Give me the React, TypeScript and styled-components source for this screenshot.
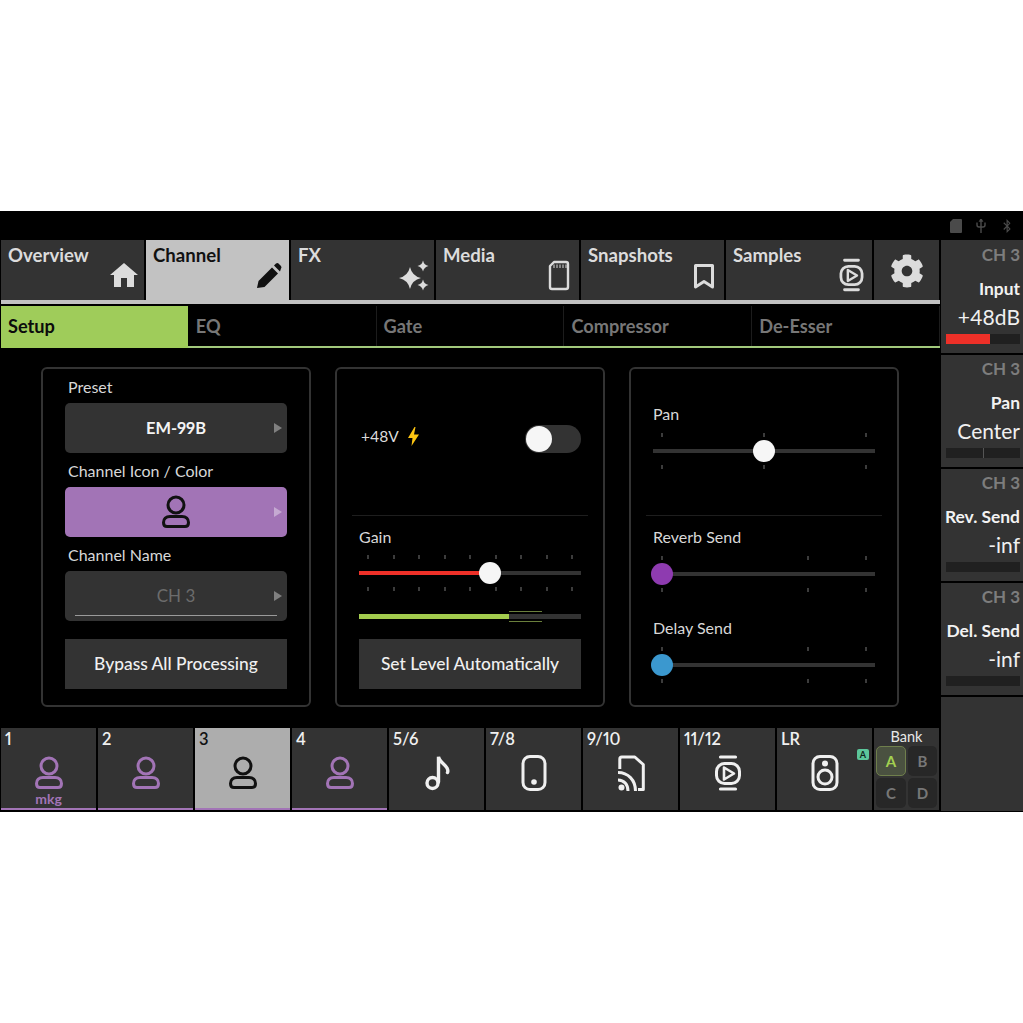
import React from "react";
import styled, { createGlobalStyle } from "styled-components";
import { FaCog, FaBluetoothB } from "react-icons/fa";

const GlobalStyle = createGlobalStyle`
  html, body { margin: 0; padding: 0; background: #fff; }
  * { box-sizing: border-box; }
  body { font-family: "Lato", "Liberation Sans", sans-serif; font-feature-settings: "pnum"; }
`;

const PURPLE = "#a274b6";
const DARK = "#333333";

const Page = styled.div`
  height: 1023px;
  padding-top: 211px;
  overflow: hidden;
`;

const Screen = styled.div`
  width: 1023px;
  height: 601px;
  background: #000;
  display: flex;
  flex-direction: column;
`;

const StatusBar = styled.div`
  height: 29px;
  flex: none;
  display: flex;
  justify-content: flex-end;
  align-items: center;
  padding: 0 9px 0 0;
  color: #4a4a4a;
  svg + svg { margin-left: 14px; }
`;

const Body = styled.div`
  flex: 1;
  display: flex;
`;

const Main = styled.div`
  width: 940px;
  flex: none;
  padding-left: 1px;
  display: flex;
  flex-direction: column;
`;

const TabBar = styled.div`
  height: 64px;
  display: flex;
  gap: 2px;
  border-bottom: 4px solid #c2c2c2;
`;

const Tab = styled.div<{ $active?: boolean; $w: number }>`
  width: ${(p) => p.$w}px;
  height: ${(p) => (p.$active ? 64 : 60)}px;
  background: ${(p) => (p.$active ? "#c2c2c2" : DARK)};
  color: ${(p) => (p.$active ? "#111" : "#dcdcdc")};
  padding: 4px 4px ${(p) => (p.$active ? 10 : 6)}px 7px;
  display: flex;
  flex-direction: column;
`;

const TabLabel = styled.div`
  font-size: 18.6px;
  line-height: 22px;
  font-weight: 700;
  height: 14px;
`;

const TabIcon = styled.svg`
  width: 36px;
  height: 36px;
  margin-top: auto;
  margin-left: auto;
  flex: none;
`;

const GearTab = styled.div`
  width: 65px;
  height: 60px;
  padding-top: 2px;
  background: ${DARK};
  color: #dcdcdc;
  display: flex;
  align-items: center;
  justify-content: center;
  font-size: 34px;
`;

const SubTabs = styled.div`
  height: 42px;
  margin-top: 2px;
  display: grid;
  grid-template-columns: repeat(5, 1fr);
  border-bottom: 2px solid #a2c97c;
  width: 939px;
`;

const SubTab = styled.div<{ $active?: boolean }>`
  height: ${(p) => (p.$active ? 42 : 40)}px;
  background: ${(p) => (p.$active ? "#9fcc5a" : "transparent")};
  background-clip: padding-box;
  color: ${(p) => (p.$active ? "#0c0c0c" : "#777")};
  border-right: 1px solid ${(p) => (p.$active ? "transparent" : "#1c1c1c")};
  font-size: 18.2px;
  font-weight: 700;
  line-height: 40px;
  padding-left: 7px;
`;

const Panels = styled.div`
  margin-top: 19px;
  padding-left: 40px;
  display: flex;
  gap: 24px;
`;

const Panel = styled.div`
  width: 270px;
  height: 340px;
  border: 2px solid #333;
  border-radius: 6px;
  padding: 0 15px;
  display: flex;
  flex-direction: column;
`;

const Section = styled.div<{ $top?: boolean; $pad?: number }>`
  padding: ${(p) => p.$pad ?? 0}px 7px 0;
  ${(p) => (p.$top ? "height: 147px; border-bottom: 1px solid #1e1e1e;" : "")}
`;

const FieldLabel = styled.div`
  color: #d8d8d8;
  font-size: 16px;
  line-height: 20px;
  padding-left: 3px;
  margin: 8px 0 6px;
`;

const Selector = styled.div<{ $bg?: string }>`
  position: relative;
  height: 50px;
  border-radius: 5px;
  background: ${(p) => p.$bg ?? DARK};
  display: flex;
  align-items: center;
  justify-content: center;
  color: #f4f4f4;
  font-size: 16.4px;
  font-weight: 700;
`;

const SelectorText = styled.span<{ $muted?: boolean }>`
  padding-bottom: 2px;
  ${(p) => (p.$muted ? "color: #6c6c6c; font-weight: 400; font-size: 17px;" : "")}
`;

const Caret = styled.span`
  position: absolute;
  right: 5px;
  top: 20px;
  width: 0;
  height: 0;
  border-left: 8px solid rgba(255, 255, 255, 0.38);
  border-top: 5px solid transparent;
  border-bottom: 5px solid transparent;
`;

const Underline = styled.span`
  position: absolute;
  left: 10px;
  right: 10px;
  bottom: 5px;
  height: 1px;
  background: #9a9a9a;
`;

const ActionButton = styled.div<{ $top?: number }>`
  height: 50px;
  margin-top: ${(p) => p.$top ?? 18}px;
  padding-bottom: 2px;
  background: ${DARK};
  color: #f0f0f0;
  font-size: 17.4px;
  font-weight: 500;
  display: flex;
  align-items: center;
  justify-content: center;
`;

const PhantomRow = styled.div`
  height: 28px;
  display: flex;
  align-items: center;
  justify-content: space-between;
`;

const PhantomLabel = styled.div`
  display: flex;
  align-items: center;
  gap: 9px;
  padding-left: 2px;
  margin-top: -6px;
  color: #dcdcdc;
  font-size: 15.5px;
`;

const Switch = styled.div`
  width: 56px;
  height: 28px;
  border-radius: 14px;
  background: ${DARK};
  padding: 1px;
`;

const SwitchKnob = styled.div`
  width: 26px;
  height: 26px;
  border-radius: 50%;
  background: #f6f6f6;
`;

const SliderLabel = styled.div<{ $top?: number; $gap?: number }>`
  color: #d8d8d8;
  font-size: 16px;
  line-height: 20px;
  margin-top: ${(p) => p.$top ?? 0}px;
  margin-bottom: ${(p) => p.$gap ?? 8}px;
`;

const SliderBox = styled.div`
  position: relative;
  height: 36px;
`;

const Track = styled.div`
  position: absolute;
  left: 0;
  right: 0;
  top: 16px;
  height: 4px;
  background: ${DARK};
`;

const TrackFill = styled.div<{ $color: string }>`
  height: 100%;
  background: ${(p) => p.$color};
`;

const Tick = styled.span<{ $bottom?: boolean }>`
  position: absolute;
  width: 2px;
  height: 4px;
  background: #3c3c3c;
  ${(p) => (p.$bottom ? "bottom: 0;" : "top: 0;")}
`;

const Thumb = styled.div<{ $color: string }>`
  position: absolute;
  top: 7px;
  width: 22px;
  height: 22px;
  margin-left: -11px;
  border-radius: 50%;
  background: ${(p) => p.$color};
`;

const Meter = styled.div`
  position: relative;
  height: 5px;
  margin-top: 23px;
  background: ${DARK};
`;

const MeterGhost = styled.div`
  position: absolute;
  left: 67.6%;
  width: 14.9%;
  top: -3px;
  bottom: -3px;
  border-top: 1px solid #6a7f3c;
  border-bottom: 1px solid #6a7f3c;
`;

const Strip = styled.div`
  margin-top: 21px;
  height: 82px;
  display: flex;
  gap: 2px;
`;

const Cell = styled.div<{ $active?: boolean; $bar?: boolean }>`
  width: 95px;
  height: 82px;
  padding-top: 1px;
  background: ${(p) => (p.$active ? "#adadad" : DARK)};
  color: ${(p) => (p.$active ? "#111" : "#f0f0f0")};
  border-bottom: 2px solid ${(p) => (p.$bar ? PURPLE : "transparent")};
  display: flex;
  flex-direction: column;
  align-items: center;
  position: relative;
`;

const CellNumber = styled.div`
  align-self: flex-start;
  padding-left: 4px;
  font-size: 16.5px;
  font-weight: 600;
  line-height: 20px;
`;

const CellIcon = styled.svg<{ $color?: string }>`
  width: 36px;
  height: 36px;
  margin-top: 6px;
  flex: none;
  color: ${(p) => p.$color ?? "inherit"};
`;

const CellName = styled.div`
  color: ${PURPLE};
  font-size: 14px;
  font-weight: 700;
  line-height: 16px;
`;

const Badge = styled.span`
  position: absolute;
  right: 3px;
  top: 21px;
  width: 12px;
  height: 11px;
  border-radius: 2px;
  background: #5cc69b;
  color: #10251c;
  font-size: 9px;
  font-weight: 700;
  line-height: 11px;
  text-align: center;
`;

const Bank = styled.div`
  width: 65px;
  height: 82px;
  background: ${DARK};
  padding: 0 2px;
`;

const BankTitle = styled.div`
  color: #e8e8e8;
  font-size: 14.5px;
  line-height: 18px;
  text-align: center;
`;

const BankGrid = styled.div`
  display: grid;
  grid-template-columns: 30px 29px;
  grid-auto-rows: 30px;
  gap: 2px;
`;

const BankButton = styled.div<{ $active?: boolean }>`
  border-radius: 5px;
  background: ${(p) => (p.$active ? "#4a5140" : "#272727")};
  border: 1px solid ${(p) => (p.$active ? "#6f7f4c" : "transparent")};
  color: ${(p) => (p.$active ? "#a3d050" : "#777")};
  font-size: 15px;
  font-weight: 700;
  display: flex;
  align-items: center;
  justify-content: center;
`;

const Side = styled.div`
  width: 83px;
  flex: none;
  padding-left: 1px;
  display: flex;
  flex-direction: column;
  gap: 2px;
`;

const SideItem = styled.div`
  height: 112px;
  background: ${DARK};
  padding: 4px 3px 0 2px;
  text-align: right;
  &:first-child { height: 113px; padding-top: 5px; }
  &:last-child { height: 114px; }
`;

const SideChannel = styled.div`
  color: #7d7d7d;
  font-size: 17px;
  font-weight: 700;
  line-height: 20px;
`;

const SideName = styled.div`
  color: #f2f2f2;
  font-size: 17.4px;
  font-weight: 700;
  line-height: 20px;
  margin-top: 14px;
  white-space: nowrap;
`;

const SideValue = styled.div`
  color: #f0f0f0;
  font-size: 21px;
  line-height: 28px;
  margin-top: 4px;
`;

const SideMeter = styled.div<{ $split?: boolean }>`
  position: relative;
  height: 10px;
  margin: 3px 0 0 3px;
  background: #202020;
  ${(p) => (p.$split ? "&::after { content: ''; position: absolute; left: 50%; top: 0; bottom: 0; width: 1px; background: #555; }" : "")}
`;

const SideMeterFill = styled.div`
  height: 100%;
  background: #ee3028;
`;

const PersonPaths = () => (
  <g fill="none" stroke="currentColor" strokeWidth="3">
    <circle cx="18" cy="11" r="8" />
    <path d="M12 22.5 H24 C28 22.5 30.5 25 30.5 28.5 C30.5 31 29 32.5 27 32.5 H9 C7 32.5 5.5 31 5.5 28.5 C5.5 25 8 22.5 12 22.5 Z" />
  </g>
);

const SamplePaths = () => (
  <g fill="none" stroke="currentColor" strokeWidth="3" strokeLinecap="round">
    <path d="M10.5 2 H25.5 M10.5 34 H25.5" strokeWidth="3.2" />
    <rect x="6.5" y="8.5" width="23" height="20" rx="8" />
    <path d="M14 12.5 L24 18.5 L14 24.5 Z" strokeWidth="2.6" strokeLinejoin="round" />
  </g>
);

function Slider({ value, color, ticks, fill }: { value: number; color: string; ticks: number[]; fill?: string }) {
  return (
    <SliderBox>
      {ticks.map((t) => (
        <Tick key={`a${t}`} style={{ left: `${t}%` }} />
      ))}
      {ticks.map((t) => (
        <Tick key={`b${t}`} $bottom style={{ left: `${t}%` }} />
      ))}
      <Track>{fill && <TrackFill $color={fill} style={{ width: `${value}%` }} />}</Track>
      <Thumb $color={color} style={{ left: `${value}%` }} />
    </SliderBox>
  );
}

const gainTicks = Array.from({ length: 9 }, (_, i) => 3.6 + i * 11.5);
const panTicks = [3.7, 49.7, 95.7];
const sendTicks = [3.7, 69.4, 95.7];

function Channels() {
  const persons = [
    { n: "1", name: "mkg" },
    { n: "2" },
    { n: "3", active: true },
    { n: "4" },
  ];
  return (
    <>
      {persons.map((c) => (
        <Cell key={c.n} $active={c.active} $bar>
          <CellNumber>{c.n}</CellNumber>
          <CellIcon viewBox="0 0 36 36" $color={c.active ? "#111" : PURPLE}>
            <PersonPaths />
          </CellIcon>
          {c.name && <CellName>{c.name}</CellName>}
        </Cell>
      ))}
      <Cell>
        <CellNumber>5/6</CellNumber>
        <CellIcon viewBox="0 0 36 36">
          <g fill="none" stroke="currentColor" strokeWidth="3.4" strokeLinecap="round">
            <circle cx="13.5" cy="28" r="5.5" />
            <path d="M19.5 27 V1.8 C20.5 7 26 9 28 13 C29 15 29 16.5 28.5 17.5" />
          </g>
        </CellIcon>
      </Cell>
      <Cell>
        <CellNumber>7/8</CellNumber>
        <CellIcon viewBox="0 0 36 36">
          <rect x="7" y="1.5" width="22" height="33" rx="7" fill="none" stroke="currentColor" strokeWidth="3" />
          <circle cx="18" cy="27" r="2.8" fill="currentColor" />
        </CellIcon>
      </Cell>
      <Cell>
        <CellNumber>9/10</CellNumber>
        <CellIcon viewBox="0 0 36 36">
          <g fill="none" stroke="currentColor" strokeWidth="3">
            <path d="M6.8 14 V4 Q6.8 2 8.8 2 H21.8 L30.3 9.5 V34.5 H25" strokeLinejoin="round" />
            <path d="M5 17.5 C15 17.5 22.5 25 22.5 36" />
            <path d="M5 25 C11 25 15 29.5 15 36" />
          </g>
          <circle cx="8.5" cy="32.5" r="3" fill="currentColor" />
        </CellIcon>
      </Cell>
      <Cell>
        <CellNumber>11/12</CellNumber>
        <CellIcon viewBox="0 0 36 36">
          <SamplePaths />
        </CellIcon>
      </Cell>
      <Cell>
        <CellNumber>LR</CellNumber>
        <CellIcon viewBox="0 0 36 36">
          <g fill="none" stroke="currentColor" strokeWidth="3">
            <rect x="6" y="1.5" width="24" height="33" rx="7" />
            <circle cx="18" cy="22" r="7" />
          </g>
          <circle cx="18" cy="8.5" r="3" fill="currentColor" />
        </CellIcon>
        <Badge>A</Badge>
      </Cell>
    </>
  );
}

export default function App() {
  return (
    <Page>
      <GlobalStyle />
      <Screen>
        <StatusBar>
          <svg width="12" height="14" viewBox="0 0 12 14">
            <path d="M3 0 H11 Q12 0 12 1 V13 Q12 14 11 14 H1 Q0 14 0 13 V3 Z" fill="currentColor" />
          </svg>
          <svg width="10" height="14" viewBox="0 0 10 14" fill="none" stroke="currentColor" strokeWidth="1.4">
            <path d="M5 0.5 V14 M1 3.5 V6 Q1 8 3 8 H7 Q9 8 9 6 V3.5" />
            <path d="M3.8 2 L5 0 L6.2 2 Z" fill="currentColor" />
          </svg>
          <FaBluetoothB size={14} />
        </StatusBar>
        <Body>
          <Main>
            <TabBar>
              <Tab $w={143}>
                <TabLabel>Overview</TabLabel>
                <TabIcon viewBox="0 0 36 36">
                  <path d="M20 5 L34 17 H30 V29 H23 V20 H17 V29 H10 V17 H6 Z" fill="currentColor" />
                </TabIcon>
              </Tab>
              <Tab $w={143} $active>
                <TabLabel>Channel</TabLabel>
                <TabIcon viewBox="0 0 36 36">
                  <path d="M8 30 L9.5 23 L23 9.5 L29 15.5 L15.5 29 Z" fill="currentColor" />
                  <path d="M25 7.5 L27 5.5 Q28.5 4.5 29.5 5.5 L32 8 Q33 9.5 32 10.5 L31 13.5 Z" fill="currentColor" />
                </TabIcon>
              </Tab>
              <Tab $w={143}>
                <TabLabel>FX</TabLabel>
                <TabIcon viewBox="0 0 36 36">
                  <path d="M16 9 Q18 18 27 20 Q18 22 16 31 Q14 22 5 20 Q14 18 16 9 Z" fill="currentColor" />
                  <path d="M29 2.5 Q30 7 34.5 8 Q30 9 29 13.5 Q28 9 23.5 8 Q28 7 29 2.5 Z" fill="currentColor" />
                  <path d="M29 21.5 Q30 26 34.5 27 Q30 28 29 32.5 Q28 28 23.5 27 Q28 26 29 21.5 Z" fill="currentColor" />
                </TabIcon>
              </Tab>
              <Tab $w={143}>
                <TabLabel>Media</TabLabel>
                <TabIcon viewBox="0 0 36 36">
                  <path d="M15 4 H27 Q29 4 29 6 V29 Q29 31 27 31 H13 Q11 31 11 29 V8 Z" fill="none" stroke="currentColor" strokeWidth="2.4" strokeLinejoin="round" />
                  <path d="M15 6.5 V10 M18 6.5 V10 M21 6.5 V10 M24 6.5 V10 M27 6.5 V10" stroke="currentColor" strokeWidth="1" />
                </TabIcon>
              </Tab>
              <Tab $w={143}>
                <TabLabel>Snapshots</TabLabel>
                <TabIcon viewBox="0 0 36 36">
                  <path d="M11.5 7.5 H28.5 V29 L20 23.5 L11.5 29 Z" fill="none" stroke="currentColor" strokeWidth="3" strokeLinejoin="round" />
                </TabIcon>
              </Tab>
              <Tab $w={146}>
                <TabLabel>Samples</TabLabel>
                <TabIcon viewBox="0 0 36 36">
                  <g transform="translate(19.5 17) scale(.92) translate(-18 -18)">
                    <SamplePaths />
                  </g>
                </TabIcon>
              </Tab>
              <GearTab>
                <FaCog />
              </GearTab>
            </TabBar>
            <SubTabs>
              <SubTab $active>Setup</SubTab>
              <SubTab>EQ</SubTab>
              <SubTab>Gate</SubTab>
              <SubTab>Compressor</SubTab>
              <SubTab>De-Esser</SubTab>
            </SubTabs>
            <Panels>
              <Panel>
                <Section>
                  <FieldLabel>Preset</FieldLabel>
                  <Selector>
                    <SelectorText>EM-99B</SelectorText>
                    <Caret />
                  </Selector>
                  <FieldLabel>Channel Icon / Color</FieldLabel>
                  <Selector $bg={PURPLE}>
                    <svg width="36" height="36" viewBox="0 0 36 36" color="#111">
                      <PersonPaths />
                    </svg>
                    <Caret />
                  </Selector>
                  <FieldLabel>Channel Name</FieldLabel>
                  <Selector>
                    <SelectorText $muted>CH 3</SelectorText>
                    <Underline />
                    <Caret />
                  </Selector>
                  <ActionButton>Bypass All Processing</ActionButton>
                </Section>
              </Panel>
              <Panel>
                <Section $top $pad={56}>
                  <PhantomRow>
                    <PhantomLabel>
                      +48V
                      <svg width="11" height="19" viewBox="0 0 11 19">
                        <path d="M6.5 0 L0 11 H4.5 L3.5 19 L11 7.5 H6 L7.5 0 Z" fill="#fdc512" />
                      </svg>
                    </PhantomLabel>
                    <Switch>
                      <SwitchKnob />
                    </Switch>
                  </PhantomRow>
                </Section>
                <Section $pad={11}>
                  <SliderLabel>Gain</SliderLabel>
                  <Slider value={59} color="#f6f6f6" ticks={gainTicks} fill="#ee3028" />
                  <Meter>
                    <TrackFill $color="#a3cc4e" style={{ width: "67.6%" }} />
                    <MeterGhost />
                  </Meter>
                  <ActionButton $top={20}>Set Level Automatically</ActionButton>
                </Section>
              </Panel>
              <Panel>
                <Section $top $pad={35}>
                  <SliderLabel $gap={9}>Pan</SliderLabel>
                  <Slider value={50} color="#f6f6f6" ticks={panTicks} />
                </Section>
                <Section $pad={11}>
                  <SliderLabel $gap={9}>Reverb Send</SliderLabel>
                  <Slider value={4} color="#8e3bb0" ticks={sendTicks} />
                  <SliderLabel $top={26} $gap={9}>Delay Send</SliderLabel>
                  <Slider value={4} color="#3b98cf" ticks={sendTicks} />
                </Section>
              </Panel>
            </Panels>
            <Strip>
              <Channels />
              <Bank>
                <BankTitle>Bank</BankTitle>
                <BankGrid>
                  <BankButton $active>A</BankButton>
                  <BankButton>B</BankButton>
                  <BankButton>C</BankButton>
                  <BankButton>D</BankButton>
                </BankGrid>
              </Bank>
            </Strip>
          </Main>
          <Side>
            <SideItem>
              <SideChannel>CH 3</SideChannel>
              <SideName>Input</SideName>
              <SideValue>+48dB</SideValue>
              <SideMeter>
                <SideMeterFill style={{ width: "59%" }} />
              </SideMeter>
            </SideItem>
            <SideItem>
              <SideChannel>CH 3</SideChannel>
              <SideName>Pan</SideName>
              <SideValue>Center</SideValue>
              <SideMeter $split />
            </SideItem>
            <SideItem>
              <SideChannel>CH 3</SideChannel>
              <SideName>Rev. Send</SideName>
              <SideValue>-inf</SideValue>
              <SideMeter />
            </SideItem>
            <SideItem>
              <SideChannel>CH 3</SideChannel>
              <SideName>Del. Send</SideName>
              <SideValue>-inf</SideValue>
              <SideMeter />
            </SideItem>
            <SideItem />
          </Side>
        </Body>
      </Screen>
    </Page>
  );
}
